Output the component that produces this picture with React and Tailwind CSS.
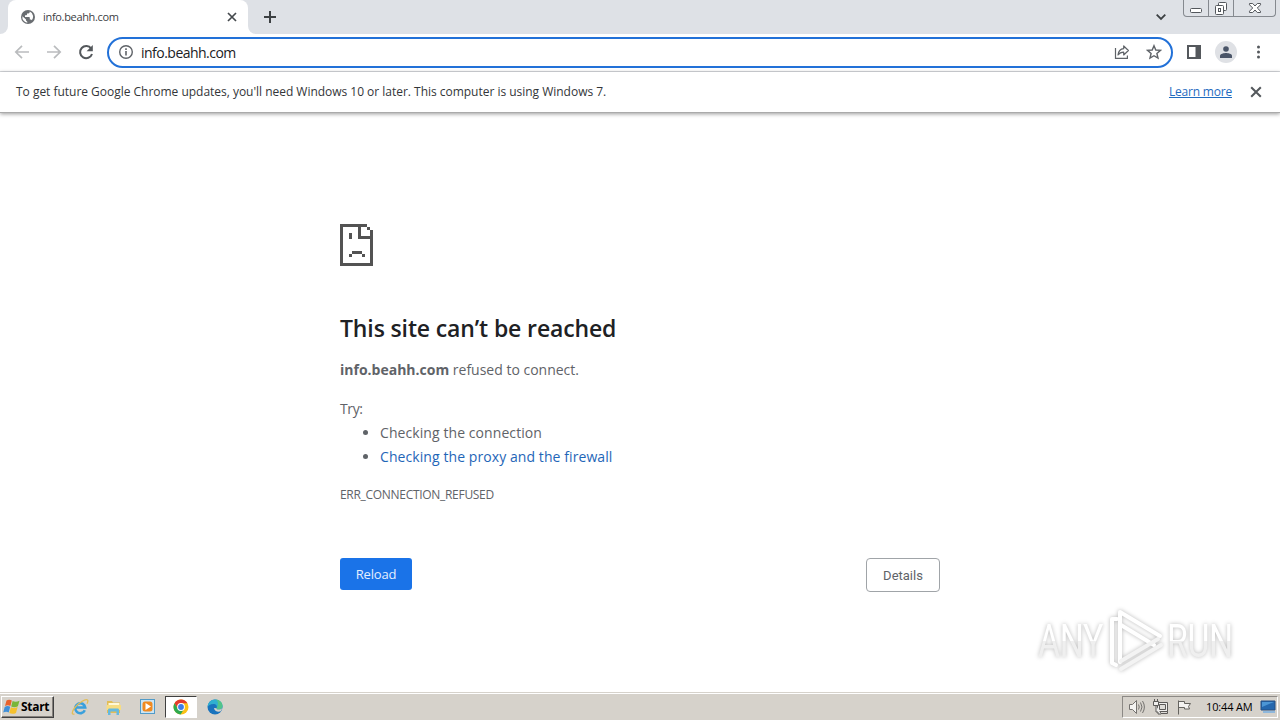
const SystemText = ({ className, children }) => (
  <span className={`font-['Open_Sans',sans-serif] whitespace-pre ${className}`}>{children}</span>
)

const GlobeIcon = () => (
  <svg className="h-3.5 w-3.5 shrink-0" viewBox="0 0 14 14">
    <circle cx="7" cy="7" r="7" fill="#6a6e72" />
    <path d="M1.400 6.200 5 9.600v1l1.300 1.200v1A5.800 5.800 0 0 1 1.400 6.200Z" fill="#fff" />
    <path d="M8.700 1.500v.6c0 .8-.6 1.300-1.300 1.300H6v1.200c0 .4-.3.7-.7.7H4V7h4c.5 0 .8.3.8.7v1.800h.8c.6 0 1 .4 1.200.8A5.700 5.700 0 0 0 8.700 1.500Z" fill="#fff" />
  </svg>
)

const CloseIcon = ({ className }) => (
  <svg className={className} viewBox="0 0 10 10" fill="none" stroke="currentColor" strokeWidth="1.7">
    <path d="m1 1 8 8M9 1 1 9" />
  </svg>
)

const WindowControls = () => (
  <div className="flex h-[17px] w-[93px] rounded-b-[4px] border border-t-0 border-[#85898f] bg-[#dfe2e7] text-[#53575c]">
    <div className="flex w-[25px] items-center justify-center border-r border-[#85898f]">
      <svg className="h-4 w-6" viewBox="0 0 24 16" fill="#fff" stroke="currentColor">
        <rect x="6.500" y="8.500" width="11" height="4" rx="1" />
      </svg>
    </div>
    <div className="flex w-[25px] items-center justify-center border-r border-[#85898f]">
      <svg className="h-4 w-6" viewBox="0 0 24 16" fill="#fff" stroke="currentColor">
        <rect x="9.500" y="2.500" width="8" height="8" rx="1" />
        <rect x="6.500" y="5.500" width="8" height="9" rx="1" />
        <rect x="9.500" y="8.500" width="2" height="3" />
      </svg>
    </div>
    <div className="flex flex-1 items-center justify-center">
      <svg className="h-4 w-6" viewBox="0 0 24 16" fill="#fff" stroke="currentColor" strokeLinejoin="round">
        <path d="M6.500 3.500h3.200L12 6l2.300-2.500h3.200v1.300L14.300 8l3.200 3.200v1.300h-3.200L12 10l-2.300 2.500H6.500v-1.300L9.700 8 6.500 4.800Z" />
      </svg>
    </div>
  </div>
)

const TabStrip = () => (
  <div className="flex h-[34px] bg-[#dee1e6]">
    <div className="flex w-2 items-end bg-white">
      <div className="h-full w-2 rounded-br-lg bg-[#dee1e6]" />
    </div>
    <div className="flex w-60 items-center rounded-t-lg bg-white pr-[11px] pl-[13px]">
      <GlobeIcon />
      <SystemText className="ml-2 flex-1 text-[11px] tracking-[-0.32px] text-[#3c4043]">info.beahh.com</SystemText>
      <CloseIcon className="h-2.5 w-2.5 text-[#45494d]" />
    </div>
    <div className="w-2 bg-linear-to-t from-white from-25% to-[#dee1e6] to-25%">
      <div className="h-full w-2 rounded-bl-lg bg-[#dee1e6]" />
    </div>
    <svg className="mt-[11px] ml-2 h-3 w-3 text-[#3c4043]" viewBox="0 0 12 12" stroke="currentColor" strokeWidth="2">
      <path d="M6 0v12M0 6h12" />
    </svg>
    <div className="flex-1" />
    <svg className="mt-[13px] mr-[17px] h-2 w-2.5 text-[#3c4043]" viewBox="0 0 10 8" fill="none" stroke="currentColor" strokeWidth="1.800">
      <path d="m.7 1.700 4.300 4.300 4.300-4.300" />
    </svg>
    <WindowControls />
    <div className="w-1" />
  </div>
)

const Toolbar = () => (
  <div className="flex h-[38px] items-center border-b border-[#d8dade] bg-white text-[#5f6368]">
    <svg className="mb-px ml-[14px] h-4 w-4 text-[#babcbe]" viewBox="0 0 16 16" fill="none" stroke="currentColor" strokeWidth="1.700">
      <path d="M15 8H2M8 1.800 1.800 8 8 14.200" />
    </svg>
    <svg className="mb-px ml-4 h-4 w-4 text-[#babcbe]" viewBox="0 0 16 16" fill="none" stroke="currentColor" strokeWidth="1.700">
      <path d="M1 8h13M8 1.800 14.200 8 8 14.200" />
    </svg>
    <svg className="mb-px ml-4 h-4 w-4" viewBox="0 0 16 16">
      <path d="M13.200 4.600A6.100 6.100 0 1 0 14 10" fill="none" stroke="#54585c" strokeWidth="2" />
      <path d="M14.800 1v6.200H8.600Z" fill="#54585c" />
    </svg>
    <div className="ml-[13px] flex h-[31px] w-[1066px] items-center rounded-full border-2 border-[#2271d8] bg-white pr-[9px] pl-[10px]">
      <svg className="mb-px h-3.5 w-3.5" viewBox="0 0 14 14" fill="none" stroke="#5f6368">
        <circle cx="7" cy="7" r="6.300" strokeWidth="1.400" />
        <path d="M7 6v4.500M7 3.300v1.600" strokeWidth="1.600" />
      </svg>
      <SystemText className="ml-2 flex-1 text-[14px] tracking-[-0.52px] text-[#202124]">info.beahh.com</SystemText>
      <svg className="mb-px h-4 w-4" viewBox="0 0 16 16" fill="none" stroke="currentColor" strokeWidth="1.200">
        <path d="M1.500 4v10.400h11.900v-2.800" />
        <path d="M9.700 2v2.700C6 5 4.400 7.500 4 11c1.400-2 3.100-2.800 5.700-2.800V11l4.700-4.500Z" strokeLinejoin="round" />
      </svg>
      <svg className="mb-px ml-4 h-4 w-4" viewBox="0 0 16 16" fill="none" stroke="currentColor" strokeWidth="1.400">
        <path d="m8 1.700 1.800 4.300 4.700.4-3.600 3.100 1.100 4.600L8 11.700l-4 2.400 1.100-4.600-3.600-3.100 4.700-.4Z" />
      </svg>
    </div>
    <svg className="mb-px ml-[14px] h-3.5 w-3.5" viewBox="0 0 14 14">
      <path d="M0 0h14v14H0Zm2 2v10h6.500V2Z" fill="#54585c" fillRule="evenodd" />
    </svg>
    <div className="mb-px ml-[14px] flex h-[22px] w-[22px] items-center justify-center rounded-full bg-[#dfe1e5]">
      <svg className="h-3 w-3 text-[#4a5568]" viewBox="0 0 12 12" fill="currentColor">
        <circle cx="6" cy="3" r="2.800" />
        <path d="M0 12V9.800C0 7.800 4 7 6 7s6 .8 6 2.800V12Z" />
      </svg>
    </div>
    <svg className="mb-px ml-5 h-3.5 w-[3px]" viewBox="0 0 3 14" fill="#54585c">
      <circle cx="1.500" cy="2" r="1.500" />
      <circle cx="1.500" cy="7" r="1.500" />
      <circle cx="1.500" cy="12" r="1.500" />
    </svg>
  </div>
)

const InfoBar = () => (
  <div className="relative z-10 flex h-[41px] items-center border-b border-[#aaa] bg-white pr-[18px] pl-4 shadow-[0_1px_4px_rgba(0,0,0,0.4)]">
    <SystemText className="flex-1 text-[12px] tracking-[-0.02px] text-[#333639]">
      To get future Google Chrome updates, you'll need Windows 10 or later. This computer is using Windows 7.
    </SystemText>
    <SystemText className="text-[12px] tracking-[-0.2px] text-[#1f6bbf] underline">Learn more</SystemText>
    <CloseIcon className="ml-[18px] h-3 w-3 text-[#54585c]" />
  </div>
)

const SadPageIcon = () => (
  <svg className="h-[42px] w-[33px]" viewBox="0 0 33 42" fill="#535353" shapeRendering="crispEdges">
    <path d="M0 0h27v3h-6v9h9V6h3v36H0ZM3 3v36h27V15H18V3Z" fillRule="evenodd" />
    <path d="M27 3h3v3h-3ZM9 9h3v6H9ZM12 27h10v3H12ZM9 30h3v3H9ZM22 30h3v3h-3Z" />
  </svg>
)

const watermarkText =
  "origin-left scale-x-[0.72] bg-linear-to-b from-white from-50% to-[#efefef] to-50% bg-clip-text font-['Roboto',sans-serif] text-[47px] tracking-[-0.5px] text-transparent"

const Watermark = () => (
  <div className="absolute top-[495px] left-[1038px] flex h-16 items-center text-white drop-shadow-[0_0_2px_rgba(0,0,0,0.28)]">
    <div className="mt-[3px] w-[69px]">
      <span className={`block w-[100px] ${watermarkText}`}>ANY</span>
    </div>
    <svg className="h-16 w-[58px]" viewBox="0 0 58 64" fill="none" stroke="currentColor" strokeWidth="4" strokeLinejoin="round" strokeLinecap="round">
      <path d="M10 11H5v44l4 2" />
      <path d="M13 54V4l40 24" />
      <path d="m14 17 33 20" />
      <path d="m14 61 40-24M14 53l37-22" stroke="#f3f3f3" />
    </svg>
    <span className={`mt-[3px] ml-[2px] ${watermarkText}`}>RUN</span>
  </div>
)

const ErrorPage = () => (
  <div className="relative flex h-[579px] justify-center overflow-hidden bg-white">
    <div className="w-[600px] pt-[111px] font-['Open_Sans',sans-serif] text-[14px] leading-6 text-[#5f6368]">
      <SadPageIcon />
      <h1 className="mt-[45px] text-[23px] leading-[34px] font-semibold tracking-[-0.13px] whitespace-nowrap text-[#202124]">This site can’t be reached</h1>
      <p className="mt-[13px] whitespace-nowrap"><strong className="font-bold">info.beahh.com</strong> refused to connect.</p>
      <p className="mt-[15px] tracking-[-0.4px]">Try:</p>
      <ul className="list-disc pl-10 tracking-[0.08px]">
        <li>Checking the connection</li>
        <li><a className="text-[#1f66b8]">Checking the proxy and the firewall</a></li>
      </ul>
      <p className="mt-[14px] text-[12px] tracking-[-0.3px]">ERR_CONNECTION_REFUSED</p>
      <div className="mt-[51px] flex items-start justify-between">
        <button className="h-8 w-[72px] rounded-[3px] bg-[#1a73e8] text-[13px] tracking-[-0.15px] text-[#e4efff]">Reload</button>
        <button className="h-[34px] w-[74px] rounded-[4px] border border-[#a0a4a8] pt-px font-['Roboto',sans-serif] text-[13px]">Details</button>
      </div>
    </div>
    <Watermark />
  </div>
)

const WindowsLogo = () => (
  <svg className="h-4 w-[17px]" viewBox="0 0 17 16">
    <path d="M3.500 1.500C5 .3 7.300.4 8.800 1.400L7.400 7C5.800 6 3.800 5.900 2 7.100Z" fill="#e8622c" />
    <path d="M9.600 1.900c2 1 4.300 1 6.900-.2l-1.600 5.500c-2.300 1.200-4.800 1.200-6.700.2Z" fill="#79b63a" />
    <path d="M1.700 7.900c2-1.200 4-1.100 5.500-.1l-1.500 5.600C4.200 12.400 2.200 12.300.2 13.500Z" fill="#3f8fd8" />
    <path d="M7.900 8.300c2 1 4.300 1 6.700-.2L13 13.900c-2 1.200-4.700 1.200-6.700.2Z" fill="#f5c12e" />
  </svg>
)

const ExplorerIcon = () => (
  <svg className="h-[18px] w-[18px]" viewBox="0 0 18 18" fill="none">
    <path d="M13.800 12.300A5 5 0 1 1 14.200 9.500H4.500" stroke="#3aa0dc" strokeWidth="2.600" />
    <path d="M3.500 16c-3 1-3-2 0-6C7.500 5 14.500.500 16.500 2c.8.800.3 2.200-.5 3.700" stroke="#e3bd55" strokeWidth="1.300" />
  </svg>
)

const FolderIcon = () => (
  <svg className="h-[18px] w-[18px]" viewBox="0 0 18 18">
    <path d="M2 3h5l1 1.500h7V15H2Z" fill="#e2bd57" />
    <path d="M3.500 5h11v4h-11Z" fill="#fff8d8" />
    <path d="M1.500 7h14.500v5H1.500Z" fill="#f7dd83" />
    <path d="M3 17v-5c0-1 .5-1.500 1.500-1.500h8c1 0 1.500.5 1.500 1.500v5h-2.500v-3.500h-6V17Z" fill="#65b9df" />
  </svg>
)

const MediaIcon = () => (
  <svg className="h-[18px] w-[18px]" viewBox="0 0 18 18">
    <rect x="1.500" y="1.500" width="14" height="14" fill="#cce5f4" stroke="#519bc8" />
    <rect x="3.500" y="3.500" width="10" height="10" rx="2.500" fill="#f08a20" />
    <path d="M6.500 5v7l5.500-3.500Z" fill="#fff" />
  </svg>
)

const ChromeIcon = () => (
  <svg className="h-4 w-4" viewBox="0 0 16 16">
    <circle cx="8" cy="8" r="7.500" fill="#fbc116" />
    <path d="M1.500 4.200a7.500 7.500 0 0 1 13 .1H8L4.800 9.800Z" fill="#e33b2e" />
    <path d="M1.500 4.200A7.500 7.500 0 0 0 7.600 15.500L11 10 4.800 9.800Z" fill="#2da94f" />
    <circle cx="8" cy="8" r="3.900" fill="#fff" />
    <circle cx="8" cy="8" r="2.900" fill="#3d7de8" />
  </svg>
)

const EdgeIcon = () => (
  <svg className="h-4 w-4" viewBox="0 0 16 16">
    <circle cx="8" cy="8" r="7.500" fill="#1973bd" />
    <path d="M.5 8C1 3.500 4 .5 8 .5c4.500 0 7.500 3 7.500 6.500 0 2.500-2 3.600-4 3.600-1.500 0-2.200-.6-1.900-1.300C10.600 7 9 5 6.500 5 3.500 5 1 6.500.5 8Z" fill="#2fb0d0" />
    <path d="M9 .6c4 .5 6.500 3.200 6.500 6.400 0 2.500-2 3.600-4 3.600-1.500 0-2.200-.6-1.900-1.300C11 7 12 3 9 .6Z" fill="#52c48a" />
    <path d="M9.600 9.300c-.4.900.4 1.300 1.900 1.300 1.500 0 2.900-.6 3.700-1.600-.2 1.300-.7 2.400-1.500 3.300-3 1-6.500-.3-6.700-3.300Z" fill="#d6d2cb" />
  </svg>
)

const Tray = () => (
  <div className="mt-[3px] flex h-[22px] w-[156px] items-center border border-t-[#8c8985] border-r-white border-b-white border-l-[#8c8985]">
    <svg className="ml-[5px] h-4 w-[18px]" viewBox="0 0 18 16" fill="none" stroke="#74726f">
      <path d="M1.500 5.500h3l4-4v13l-4-4h-3Z" fill="#f4f3f1" />
      <path d="M10.500 5.500q1.500 2.500 0 5M12.500 3.500q3 4.500 0 9M14.500 2q3.800 6 0 12" />
    </svg>
    <svg className="ml-[6px] h-4 w-[17px]" viewBox="0 0 17 16" fill="#efeeec" stroke="#5b5957">
      <path d="M5.500 3.500h10v9h-10Z" />
      <path d="M7.500 5.500h6v5h-6ZM8.500 14.500h7v-2h-7Z" fill="#dddbd7" />
      <path d="M1.500 2.500h5v4h-5ZM2.500 0v2M5.500 0v2M4 6.500v6.500h2v2h3" />
    </svg>
    <svg className="ml-[7px] h-4 w-4" viewBox="0 0 16 16" fill="#f4f3f1" stroke="#65635f">
      <path d="M2.500 15.500v-14M2.500 2.500h6v2h6l-2 3 1 2.500h-5V8.500h-6Z" />
    </svg>
    <SystemText className="ml-[14px] w-[54px] text-[11px] tracking-[-0.15px] text-black">10:44 AM</SystemText>
    <svg className="h-4 w-4" viewBox="0 0 16 16">
      <path d="M1 2h14v9H1Z" fill="#2467ae" stroke="#244f82" />
      <path d="M2 3h12L2 8Z" fill="#4c96d5" />
      <path d="M3 12h12v2H3Z" fill="#8fb8dc" />
    </svg>
  </div>
)

const Taskbar = () => (
  <div className="flex h-7 border-t border-[#d6d2cb] bg-[#d6d2cb] shadow-[inset_0_1px_0_#fff]">
    <button className="mt-[3px] ml-px flex h-[22px] w-[53px] items-center border border-t-white border-r-[#404040] border-b-[#404040] border-l-white pl-px shadow-[inset_-1px_-1px_0_#85817c]">
      <WindowsLogo />
      <SystemText className="ml-px text-[12px] font-bold tracking-[-0.3px] text-black">Start</SystemText>
    </button>
    <div className="mt-[5px] ml-[17px] flex h-[18px] gap-4">
      <ExplorerIcon />
      <FolderIcon />
      <MediaIcon />
    </div>
    <div className="mt-[3px] ml-[8px] flex h-[22px] w-8 items-center justify-center border border-t-[#404040] border-r-white border-b-white border-l-[#404040] bg-white">
      <ChromeIcon />
    </div>
    <div className="mt-[6px] ml-[10px]">
      <EdgeIcon />
    </div>
    <div className="flex-1" />
    <Tray />
    <div className="w-0.5" />
  </div>
)

const App = () => {
  return (
    <div className="flex h-[720px] w-[1280px] flex-col overflow-hidden bg-white">
      <TabStrip />
      <Toolbar />
      <InfoBar />
      <ErrorPage />
      <Taskbar />
    </div>
  )
}

export default App
